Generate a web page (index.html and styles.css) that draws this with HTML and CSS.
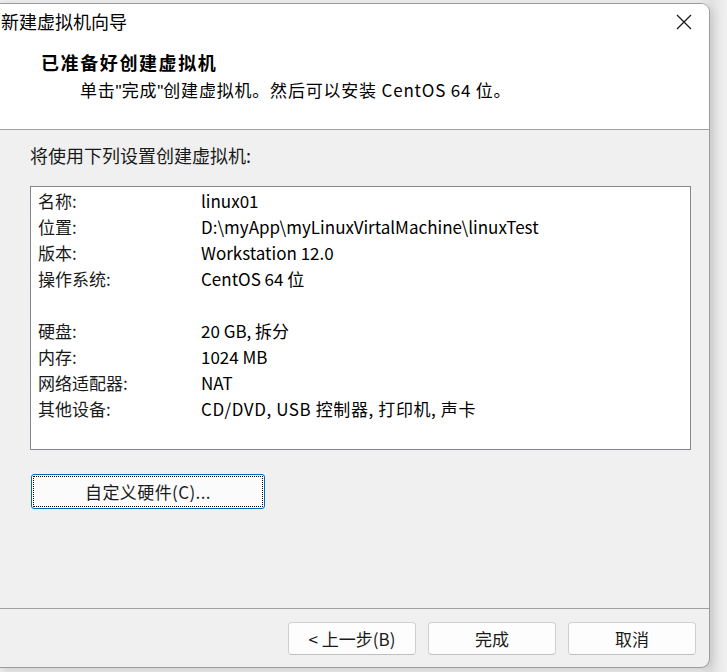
FILE: index.html
```html
<!DOCTYPE html>
<html>
<head>
    <meta charset="UTF-8">
    <link rel="stylesheet" href="styles.css">
</head>
<body>
    <div class="wizard">
        <div class="wizard-top">
            <div class="title-bar">
                <span class="title-text">新建虚拟机向导</span>
                <svg class="close-icon" width="16" height="16" viewBox="0 0 16 16">
                    <path d="M1 1 L15 15 M15 1 L1 15" stroke="#1a1a1a" stroke-width="1.3" fill="none"/>
                </svg>
            </div>
            <div class="page-head">
                <div class="page-title">已准备好创建虚拟机</div>
                <div class="page-desc">单击<span class="quote">"</span>完成<span class="quote">"</span>创建虚拟机。然后可以安装 CentOS 64 位。</div>
            </div>
        </div>
        <div class="wizard-body">
            <div class="intro">将使用下列设置创建虚拟机:</div>
            <div class="summary">
                <div class="summary-row"><span class="summary-key">名称:</span><span>linux01</span></div>
                <div class="summary-row"><span class="summary-key">位置:</span><span>D:\myApp\myLinuxVirtalMachine\linuxTest</span></div>
                <div class="summary-row"><span class="summary-key">版本:</span><span>Workstation 12.0</span></div>
                <div class="summary-row"><span class="summary-key">操作系统:</span><span>CentOS 64 位</span></div>
                <div class="summary-row"></div>
                <div class="summary-row"><span class="summary-key">硬盘:</span><span>20 GB, 拆分</span></div>
                <div class="summary-row"><span class="summary-key">内存:</span><span>1024 MB</span></div>
                <div class="summary-row"><span class="summary-key">网络适配器:</span><span>NAT</span></div>
                <div class="summary-row"><span class="summary-key">其他设备:</span><span class="summary-wide">CD/DVD, USB 控制器, 打印机, 声卡</span></div>
            </div>
            <button class="custom-btn">自定义硬件(C)...</button>
        </div>
        <div class="wizard-footer">
            <button class="nav-btn">&lt; 上一步(B)</button>
            <button class="nav-btn">完成</button>
            <button class="nav-btn">取消</button>
        </div>
    </div>
</body>
</html>
```

FILE: styles.css
```css
html, body {
    margin: 0;
    padding: 0;
}
body {
    width: 727px;
    height: 672px;
    overflow: hidden;
    background: linear-gradient(to right, #ececec 700px, #e2e2e2 711px, #f0f0f0 727px);
    font-family: "Noto Sans CJK SC", "Noto Sans", sans-serif;
    font-size: 17px;
    color: #000;
}
.wizard {
    box-sizing: border-box;
    width: 710px;
    height: 665px;
    margin-top: 3px;
    background: #f0f0f0;
    border: 1px solid #9c9c9c;
    border-left: none;
    border-radius: 0 9px 9px 0;
    box-shadow: 3px 3px 8px rgba(0,0,0,0.12);
    display: flex;
    flex-direction: column;
    overflow: hidden;
}
.wizard-top {
    background: #fff;
    border-bottom: 1px solid #a0a0a0;
    height: 126px;
    box-sizing: border-box;
}
.title-bar {
    height: 34px;
    display: flex;
    justify-content: space-between;
    align-items: center;
    padding-right: 17px;
}
.title-text {
    font-size: 18px;
    line-height: 34px;
    padding-left: 1px;
}
.close-icon {
    margin-top: 1px;
}
.page-head {
    padding-left: 41px;
    margin-top: 11px;
}
.page-title {
    font-weight: bold;
    font-size: 18px;
    line-height: 26px;
    letter-spacing: 1.6px;
}
.page-desc {
    line-height: 26px;
    margin-top: 2px;
    padding-left: 39px;
    letter-spacing: 0.8px;
}
.quote {
    font-family: "Liberation Sans", sans-serif;
    letter-spacing: 0;
}
.wizard-body {
    padding: 12px 18px 0 30px;
}
.intro {
    font-size: 18px;
    line-height: 26px;
    color: #1a1a1a;
}
.summary {
    margin-top: 18px;
    box-sizing: border-box;
    height: 264px;
    background: #fff;
    border: 1px solid #828790;
    padding: 1px 0 0 7px;
}
.summary-row {
    display: flex;
    height: 26px;
    line-height: 26px;
}
.summary-key {
    width: 163px;
    flex-shrink: 0;
    color: #1a1a1a;
}
.summary-wide {
    letter-spacing: 0.6px;
}
.custom-btn {
    margin: 24px 0 0 1px;
    width: 234px;
    height: 35px;
    background: #fbfbfb;
    border: 1px solid #0067c0;
    border-radius: 3px;
    outline: 1px dotted #000;
    outline-offset: -3px;
    font-family: inherit;
    font-size: 17px;
    letter-spacing: 0.4px;
    color: #1a1a1a;
    padding: 0;
}
.wizard-footer {
    margin-top: auto;
    border-top: 1px solid #a0a0a0;
    height: 59px;
    box-sizing: border-box;
    display: flex;
    justify-content: flex-end;
    align-items: flex-start;
    gap: 12px;
    padding: 13px 13px 0 0;
}
.nav-btn {
    width: 128px;
    height: 33px;
    background: #fdfdfd;
    border: 1px solid #d0d0d0;
    border-bottom-color: #c0c0c0;
    border-radius: 4px;
    font-family: inherit;
    font-size: 17px;
    color: #1a1a1a;
    padding: 0;
}
```
